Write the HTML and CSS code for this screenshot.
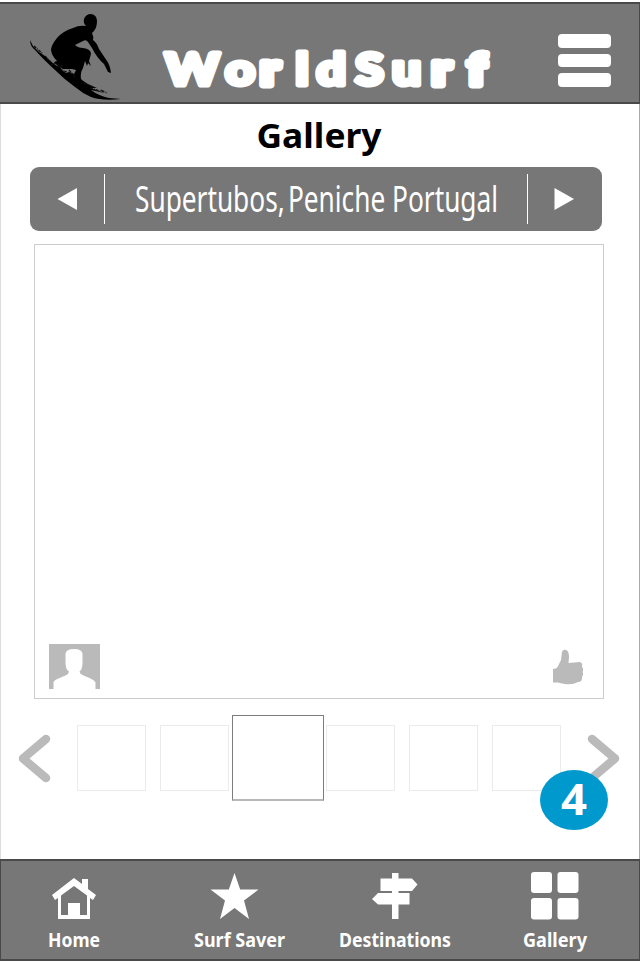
FILE: index.html
```
<!DOCTYPE html>
<html lang="en">
<head>
<meta charset="utf-8">
<title>WorldSurf</title>
<link rel="stylesheet" href="styles.css">
</head>
<body>
<div class="app">
  <header class="header">
    <svg class="surfer" width="94" height="90" viewBox="28 12 94 90">
      <path d="M84 19Q86 14 91 14Q97 15 97 21Q97 27 94 31L92 33Q94 37 93 40Q97 43 99 49L107 61Q110 65 111 73L108 72L104 64Q97 58 92 48L88 42Q86 39 83 41L75 45Q78 48 83 48Q91 49 91 54L89 61L91 66L88 63L87 66L85 61L83 68Q80 73 81 79Q86 84 97 88L91 88L104 93Q96 91 91 90Q99 96 109 98L121 99Q102 101 91 97Q82 93 75 87Q65 80 55 70Q43 59 35 50Q30 46 30 40L33 46Q38 52 45 56Q53 64 59 67L54 62L57 61Q51 55 51 49Q52 44 57 38Q63 31 73 28Q79 25 86 26Q83 23 84 19Z"/>
      <path class="spray" d="M34 46L43 54M45 56L51 62M51 65L56 62M54 63L63 66M63 71L71 72M90 88L104 92M101 90L107 93M83 83L94 87"/>
      <path class="gap" d="M60 67L63 69L72 69L76 70L74 74L70 72L66 73L62 70Z"/>
      <path class="spray" d="M60 65L63 71M64 71L72 74M69 70L76 78"/>
    </svg>
    <svg class="brand" width="340" height="60" viewBox="158 40 340 60" role="img">
      <g transform="translate(158 0) scale(1.17 1)"><text class="brand-text" y="85" x="6 57.500 87.500 117.500 135.500 168.500 200 234 264.500">Wo<tspan class="wide">r</tspan>ldSu<tspan class="wide">rf</tspan></text></g>
    </svg>
    <div class="menu"><i></i><i></i><i></i></div>
  </header>

  <main class="content">
    <h1 class="title"><svg width="130" height="44"><text x="1.500" y="28" textLength="125" lengthAdjust="spacingAndGlyphs">Gallery</text></svg></h1>
    <div class="location">
      <div class="step"><svg width="20" height="22"><path d="M.5 11L20 0V22Z"/></svg></div>
      <div class="place"><svg width="366" height="50"><text x="1" y="38" textLength="363" lengthAdjust="spacingAndGlyphs">Supertubos,<tspan dx="-5">&#32;Peniche</tspan> Portugal</text></svg></div>
      <div class="step"><svg width="20" height="22"><path d="M19 11L-.5 0V22Z"/></svg></div>
    </div>
    <section class="photo">
      <svg width="51" height="45" viewBox="0 0 51 46" preserveAspectRatio="none"><path d="M0 0H51V46H46.500V39Q45.500 37 41 35L34 32Q31 31 30.500 28Q33 27 33.500 20V10Q33 5 25 5Q17 5 16.500 10V20Q17 27 20 28Q19.500 31 17 32L10 35Q5 37 4.500 39V46H0Z"/></svg>
      <svg width="31" height="36" viewBox="0 0 31 36"><path d="M0 20Q4 20 5 17L8 11L9 3Q10 0 13 1Q16 2 16 8L15.500 14L27 13Q30 14 29 18Q31 20 29.500 23Q31 25 29 28Q29.500 33 25 33Q20 36 12 35Q7 34 5 33.500H0Z"/></svg>
    </section>
    <div class="strip">
      <svg class="arrow" width="36" height="50"><path d="M28 6L5 25.500L28 45"/></svg>
      <div class="thumbs"><i></i><i></i><i class="current"></i><i></i><i></i><i></i></div>
      <svg class="arrow" width="36" height="50"><path d="M0 6L23 25.500L0 45"/></svg>
      <div class="badge"><svg width="68" height="60"><text x="21" y="45" textLength="26" lengthAdjust="spacingAndGlyphs">4</text></svg></div>
    </div>
  </main>

  <nav class="nav">
    <a class="item home">
      <svg width="50" height="52" viewBox="0 0 50 52"><path fill-rule="evenodd" d="M25 8L33 14V9H39V19L47 25L44 30L41 28V49H9V28L6 30L3 25ZM25 16L12 25.500V45H19V33H31V45H38V25.500Z"/></svg>
      <svg class="label" width="56" height="30"><text x="2" y="20" textLength="52" lengthAdjust="spacingAndGlyphs">Home</text></svg>
    </a>
    <a class="item saver">
      <svg width="50" height="52" viewBox="0 0 50 52"><path d="M20.500 3L26.200 19.500H44.500L30 30.500L35 49L20.500 38L6 49L11 30.500L-3.500 19.500H14.800Z"/></svg>
      <svg class="label" width="95" height="30"><text x="2" y="20" textLength="91" lengthAdjust="spacingAndGlyphs">Surf Saver</text></svg>
    </a>
    <a class="item dest">
      <svg width="50" height="52" viewBox="0 0 50 52"><path d="M22 3H28.500V8.500H42L47.500 14.500L42 21H28.500V23H39.500V34.500H28.500V49H22V34.500H8L2 29L8 23H22V21H10.500V8.500H22Z"/></svg>
      <svg class="label" width="116" height="30"><text x="2" y="20" textLength="112" lengthAdjust="spacingAndGlyphs">Destinations</text></svg>
    </a>
    <a class="item gallery">
      <svg width="50" height="52" viewBox="0 0 50 52"><rect x="1" y="2" width="21" height="21" rx="3"/><rect x="27.500" y="2" width="21" height="21" rx="3"/><rect x="1" y="28" width="21" height="21.500" rx="3"/><rect x="27.500" y="28" width="21" height="21.500" rx="3"/></svg>
      <svg class="label" width="68" height="30"><text x="2" y="20" textLength="64" lengthAdjust="spacingAndGlyphs">Gallery</text></svg>
    </a>
  </nav>
</div>
</body>
</html>
```
FILE: styles.css
```
* { box-sizing: border-box; }
body { margin: 0; background: #fff; font-family: "Open Sans", "Noto Sans", sans-serif; }
svg { display: block; flex: none; overflow: visible; }
.app { width: 640px; height: 962px; padding-top: 2px; display: flex; flex-direction: column; }
.header {
  height: 102px; flex: none; display: flex; align-items: flex-start;
  background: #777; border: solid #494949; border-width: 2px 1px 2px 0; padding-left: 28px;
}
.surfer { margin-top: 8px; }
.surfer .gap { fill: #777; }
.surfer .spray { fill: none; stroke: #111; stroke-width: 1.2; stroke-dasharray: 3 1 1 1; }
.brand { margin: 36px 0 0 36px; }
.brand-text { font: 900 44px Lato, sans-serif; fill: #fff; stroke: #fff; stroke-width: 5px; stroke-linejoin: round; }
.brand-text .wide { stroke-width: 7px; }
.menu { display: flex; flex-direction: column; gap: 6px; margin: 30px 0 0 60px; }
.menu i { width: 53px; height: 13.500px; border-radius: 4px; background: #fff; }
.content {
  height: 755px; flex: none; border: solid #ddd; border-width: 0 1px; border-right-color: #aaa;
  padding: 16px 0 0 29px;
}
.title { margin: 0; height: 47px; padding-left: 225px; font-size: 34px; }
.title text { font: 700 34px "Noto Sans", sans-serif; }
.location {
  width: 571.500px; height: 64px; background: #777; border-radius: 9px;
  display: flex; align-items: center; fill: #fff;
}
.step { width: 74px; height: 50px; display: flex; align-items: center; justify-content: center; }
.place { width: 424px; height: 50px; border: solid #fff; border-width: 0 1px; padding-left: 29px; }
.place text { font: 400 36px "Noto Sans", sans-serif; }
.photo {
  width: 570px; height: 455px; margin: 13px 0 0 4px; padding: 0 19px 9px 14px;
  border: 1px solid #ccc; fill: #bababa;
  display: flex; align-items: flex-end; justify-content: space-between;
}
.photo svg:last-child { margin-bottom: 4px; }
.strip { position: relative; width: 610px; height: 86px; margin: 16px 0 0 -12px; display: flex; align-items: center; }
.arrow path { fill: none; stroke: #bababa; stroke-width: 8.5; stroke-linecap: round; stroke-linejoin: round; }
.thumbs { flex: 1; display: flex; align-items: center; gap: 14px; padding-left: 23px; }
.thumbs i { flex: none; width: 69px; height: 66px; border: 1px solid #ebebeb; background: #fff; }
.thumbs .current { width: 92px; height: 86px; margin: 0 -12px 0 -11px; border-color: #7c7c7c; border-bottom: 2px solid #b8b8b8; }
.badge { position: absolute; left: 522px; top: 55px; width: 68px; height: 60px; border-radius: 50%; background: #0099ce; fill: #fff; }
.badge text { font: 700 43px "Open Sans", sans-serif; }
.nav {
  height: 102px; flex: none; background: #777; border: solid #494949; border-width: 2px 1px;
  display: flex; fill: #fff; padding: 9px 20px 0 13px;
}
.item { height: 84px; display: flex; flex-direction: column; align-items: center; }
.label { margin-top: 5px; }
.label text { font: 700 20px "Noto Sans", sans-serif; }
.home { width: 120px; }
.saver { width: 210px; }
.dest { width: 101px; margin-right: 59px; }
.gallery { width: 101px; }
```
